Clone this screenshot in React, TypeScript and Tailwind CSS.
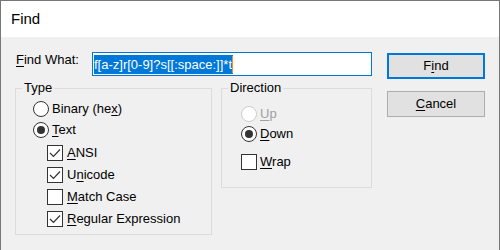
import type { ReactNode } from "react"

function Key({ children }: { children: ReactNode }) {
  return <span className="underline underline-offset-[2px]">{children}</span>
}

function Radio({
  checked,
  disabled,
  children,
  className = "",
}: {
  checked?: boolean
  disabled?: boolean
  children: ReactNode
  className?: string
}) {
  return (
    <div className={`flex items-center h-[20px] gap-[3px] ${className}`}>
      <span
        className={`w-[16px] h-[16px] rounded-full border bg-white flex items-center justify-center ${
          disabled ? "border-[#cccccc]" : "border-[#333333]"
        }`}
      >
        {checked && <span className="w-[8px] h-[8px] rounded-full bg-[#333333]" />}
      </span>
      <span className={disabled ? "text-[#a0a0a0]" : "text-black"}>{children}</span>
    </div>
  )
}

function Check({
  checked,
  children,
  className = "",
  gap = "gap-[4px]",
}: {
  checked?: boolean
  children: ReactNode
  className?: string
  gap?: string
}) {
  return (
    <div className={`flex items-center h-[22px] ${gap} ${className}`}>
      <span className="w-[16px] h-[16px] border border-[#333333] bg-white flex items-center justify-center">
        {checked && (
          <svg width="12" height="10" viewBox="0 0 12 10" fill="none">
            <path d="M1 5 L4.5 8.5 L11 1.5" stroke="#333333" strokeWidth="1.2" />
          </svg>
        )}
      </span>
      <span>{children}</span>
    </div>
  )
}

export default function App() {
  return (
    <div className="w-[500px] h-[250px] overflow-hidden bg-[#f0f0f0] border-t border-x border-[#777777] font-['Liberation_Sans',Arial,sans-serif] text-[13px] leading-[16px] text-black">
      {/* Title bar */}
      <div className="h-[36px] bg-white flex items-center pl-[10px] text-[15px]">Find</div>

      <div className="flex pt-[15px] pl-[14px]">
        {/* Left column */}
        <div className="w-[357px] flex flex-col">
          <div className="flex items-start h-[24px]">
            <span className="w-[77px] pl-[1px]">
              <Key>F</Key>ind What:
            </span>
            <div className="w-[280px] h-[24px] border border-[#0078d7] bg-white flex items-center pl-[1px]">
              <span className="bg-[#0078d7] text-white leading-[19px] h-[19px] pr-[1px]">
                f[a-z]r[0-9]?s[[:space:]]*t
              </span>
              <span className="w-[1px] h-[17px] bg-[#ff8728] -ml-[1px]" />
            </div>
          </div>

          <div className="mt-[4px] flex items-start gap-[9px]">
            {/* Type */}
            <fieldset className="w-[197px] h-[155px] border border-[#dcdcdc]">
              <legend className="ml-[6px] px-[2px] leading-[16px]">Type</legend>
              <div className="pl-[17px] pt-[3px]">
                <Radio>
                  Binary (he<Key>x</Key>)
                </Radio>
                <Radio checked className="mt-[1px]">
                  <Key>T</Key>ext
                </Radio>
                <div className="pl-[14px] pt-[2px]">
                  <Check checked>
                    <Key>A</Key>NSI
                  </Check>
                  <Check checked>
                    U<Key>n</Key>icode
                  </Check>
                  <Check>
                    <Key>M</Key>atch Case
                  </Check>
                  <Check checked>
                    <Key>R</Key>egular Expression
                  </Check>
                </div>
              </div>
            </fieldset>

            {/* Direction */}
            <fieldset className="w-[151px] h-[108px] border border-[#dcdcdc]">
              <legend className="ml-[6px] px-[2px] leading-[16px]">Direction</legend>
              <div className="pl-[19px] pt-[8px]">
                <Radio disabled>
                  <Key>U</Key>p
                </Radio>
                <Radio checked>
                  <Key>D</Key>own
                </Radio>
                <Check gap="gap-[3px]" className="mt-[7px]">
                  <Key>W</Key>rap
                </Check>
              </div>
            </fieldset>
          </div>
        </div>

        {/* Buttons */}
        <div className="ml-[15px] flex flex-col gap-[12px] pt-[1px]">
          <button className="w-[98px] h-[26px] bg-[#e1e1e1] border-2 border-[#0078d7] flex items-center justify-center">
            F<Key>i</Key>nd
          </button>
          <button className="w-[98px] h-[26px] bg-[#e1e1e1] border border-[#adadad] flex items-center justify-center">
            <Key>C</Key>ancel
          </button>
        </div>
      </div>
    </div>
  )
}
